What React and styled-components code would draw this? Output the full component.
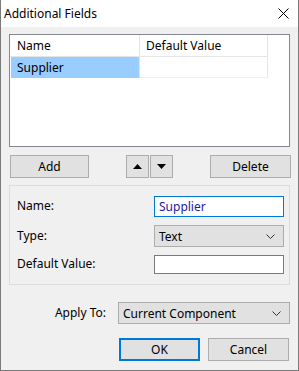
import React from 'react';
import styled, { createGlobalStyle } from 'styled-components';

const Global = createGlobalStyle`
  html, body {
    margin: 0;
    padding: 0;
    background: #ffffff;
  }
  * {
    box-sizing: border-box;
  }
`;

const Window = styled.div`
  width: 299px;
  height: 371px;
  display: flex;
  flex-direction: column;
  background: #f0f0f0;
  border: 1px solid #7a7a7a;
  border-top: none;
  font-family: "Noto Sans", "Open Sans", sans-serif;
  font-size: 12px;
  color: #000;
`;

const TitleBar = styled.div`
  height: 27px;
  flex: none;
  background: #fff;
  display: flex;
  align-items: center;
  justify-content: space-between;
  padding: 0 9px 1px 3px;
`;

const Title = styled.span`
  font-size: 12px;
`;

const Body = styled.div`
  flex: 1;
  display: flex;
  flex-direction: column;
  padding: 7px 8px 0 8px;
`;

const ListBox = styled.div`
  height: 113px;
  border: 1px solid #828790;
  background: #fff;
  display: flex;
  flex-direction: column;
`;

const Row = styled.div`
  display: grid;
  grid-template-columns: 130px 128px;
  height: ${p => (p.$header ? '22px' : '21px')};
`;

const Cell = styled.div`
  display: flex;
  align-items: center;
  padding-left: ${p => (p.$first ? '7px' : '6px')};
  border-right: 1px solid #e5e5e5;
  border-bottom: 1px solid ${p => (p.$header ? '#e5e5e5' : '#f0f0f0')};
  background: ${p => (p.$selected ? '#99ccff' : 'transparent')};
  ${p => p.$selected && 'border-bottom-color: #99ccff; margin-left: 1px; padding-left: 6px;'}
`;

const ButtonRow = styled.div`
  display: grid;
  grid-template-columns: 79px 1fr 81px;
  align-items: center;
  margin: 8px -1px 0 1px;
`;

const Button = styled.button`
  height: ${p => (p.$h || 23)}px;
  width: ${p => (p.$w ? `${p.$w}px` : 'auto')};
  padding: 0;
  background: #e1e1e1;
  border: ${p => (p.$default ? '2px solid #0078d7' : '1px solid #adadad')};
  font-family: inherit;
  font-size: 12px;
  color: #000;
  display: flex;
  align-items: center;
  justify-content: center;
`;

const Arrows = styled.div`
  display: flex;
  justify-content: center;
  gap: 1px;
`;

const Group = styled.div`
  margin-top: 7px;
  height: 100px;
  border: 1px solid #dcdcdc;
  padding: 10px 5px 0 7px;
  display: grid;
  grid-template-columns: 137px 130px;
  grid-auto-rows: min-content;
  row-gap: 8px;
`;

const Label = styled.div`
  display: flex;
  align-items: center;
  padding-bottom: 2px;
`;

const Input = styled.div`
  height: ${p => p.$h}px;
  background: #fff;
  border: 1px solid ${p => (p.$focus ? '#0078d7' : '#7a7a7a')};
  display: flex;
  align-items: center;
  padding-left: 4px;
  color: ${p => (p.$focus ? '#1a1aa6' : '#000')};
`;

const Select = styled.div`
  height: 22px;
  width: ${p => (p.$w ? `${p.$w}px` : 'auto')};
  background: #e1e1e1;
  border: 1px solid #adadad;
  display: flex;
  align-items: center;
  justify-content: space-between;
  padding: 0 8px 0 4px;
`;

const ApplyRow = styled.div`
  margin-top: 17px;
  display: flex;
  align-items: center;
  justify-content: flex-end;
  gap: 12px;
`;

const ApplyLabel = styled.span`
  padding-bottom: 2px;
`;

const Footer = styled.div`
  margin-top: 14px;
  display: flex;
  justify-content: flex-end;
  gap: 8px;
  padding-right: 1px;
`;

const Chevron = () => (
  <svg width="9" height="5" viewBox="0 0 9 5">
    <polyline points="0.5,0.5 4.5,4.5 8.5,0.5" fill="none" stroke="#333" strokeWidth="1" />
  </svg>
);

const Close = () => (
  <svg width="11" height="11" viewBox="0 0 11 11">
    <path d="M0.5 0.5 L10.5 10.5 M10.5 0.5 L0.5 10.5" stroke="#000" strokeWidth="1" />
  </svg>
);

const Tri = ({ up }) => (
  <svg width="9" height="5" viewBox="0 0 9 5">
    <polygon points={up ? '0,5 9,5 4.5,0' : '0,0 9,0 4.5,5'} fill="#000" />
  </svg>
);

export default function App() {
  return (
    <Window>
      <Global />
      <TitleBar>
        <Title>Additional Fields</Title>
        <Close />
      </TitleBar>
      <Body>
        <ListBox>
          <Row $header>
            <Cell $header $first>Name</Cell>
            <Cell $header>Default Value</Cell>
          </Row>
          <Row>
            <Cell $first $selected>Supplier</Cell>
            <Cell></Cell>
          </Row>
        </ListBox>

        <ButtonRow>
          <Button $w={79}>Add</Button>
          <Arrows>
            <Button $w={23}><Tri up /></Button>
            <Button $w={23}><Tri /></Button>
          </Arrows>
          <Button $w={81}>Delete</Button>
        </ButtonRow>

        <Group>
          <Label>Name:</Label>
          <Input $h={21} $focus>Supplier</Input>
          <Label>Type:</Label>
          <Select>Text<Chevron /></Select>
          <Label>Default Value:</Label>
          <Input $h={19} />
        </Group>

        <ApplyRow>
          <ApplyLabel>Apply To:</ApplyLabel>
          <Select $w={172}>Current Component<Chevron /></Select>
        </ApplyRow>

        <Footer>
          <Button $w={81} $default>OK</Button>
          <Button $w={81}>Cancel</Button>
        </Footer>
      </Body>
    </Window>
  );
}
